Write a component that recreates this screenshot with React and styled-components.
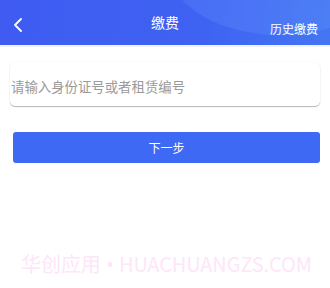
import React from "react";
import styled, { createGlobalStyle } from "styled-components";

const Global = createGlobalStyle`
  html, body {
    margin: 0;
    padding: 0;
    background: #ffffff;
    font-family: "Noto Sans CJK SC", "Noto Sans", sans-serif;
  }
`;

const Page = styled.div`
  width: 330px;
  height: 288px;
  overflow: hidden;
  background: #fff;
`;

const Header = styled.div`
  position: relative;
  height: 45px;
  overflow: hidden;
  background: linear-gradient(100deg, #3f5bf1 0%, #3e62f2 60%, #4476f2 100%);
  display: flex;
  align-items: center;
  justify-content: space-between;
  padding: 0 12px 0 13px;
  border-bottom: 2px solid #f2f3f7;
`;

const Swoosh = styled.div`
  position: absolute;
  right: -60px;
  top: -95px;
  width: 220px;
  height: 130px;
  border-radius: 50%;
  background: rgba(110, 160, 255, 0.22);
`;

const BackButton = styled.div`
  position: relative;
  z-index: 1;
  display: flex;
  margin-top: 5px;
`;

const Title = styled.div`
  position: absolute;
  left: 0;
  right: 0;
  top: 0;
  text-align: center;
  color: #fff;
  font-size: 14px;
  line-height: 44px;
`;

const HeaderLink = styled.div`
  position: relative;
  z-index: 1;
  color: #fff;
  font-size: 12px;
  margin-top: 11px;
`;

const Body = styled.div`
  padding: 15px 10px 0 10px;
`;

const InputCard = styled.div`
  height: 44px;
  border-radius: 5px;
  background: #fff;
  box-shadow: 0 1px 1px rgba(0, 0, 0, 0.28), 0 0 3px rgba(0, 0, 0, 0.04);
  display: flex;
  align-items: center;
  padding: 0 1px;
`;

const Input = styled.input`
  border: none;
  outline: none;
  width: 100%;
  font-family: inherit;
  font-size: 13.4px;
  color: #333;
  background: transparent;
  padding: 4px 0 0 0;
  &::placeholder {
    color: #9a9a9a;
  }
`;

const NextButton = styled.button`
  display: block;
  width: 307px;
  height: 31px;
  margin: 26px 0 0 3px;
  border: none;
  border-radius: 3px;
  background: #3d69f5;
  color: #fff;
  font-family: inherit;
  font-size: 12px;
`;

const Watermark = styled.div`
  margin-top: 86px;
  padding-left: 3px;
  text-align: center;
  color: #fde6f8;
  font-size: 20px;
  font-family: "Noto Sans CJK SC", "Noto Sans", sans-serif;
  letter-spacing: -0.1px;
  white-space: nowrap;
`;

const Dot = styled.span`
  font-family: "Noto Sans", sans-serif;
  margin: 0 1px;
`;

export default function App() {
  return (
    <Page>
      <Global />
      <Header>
        <Swoosh />
        <BackButton>
          <svg width="10" height="14" viewBox="0 0 10 14">
            <path d="M8 1 L2 7 L8 13" stroke="#fff" strokeWidth="1.8" fill="none" strokeLinecap="round" strokeLinejoin="round" />
          </svg>
        </BackButton>
        <Title>缴费</Title>
        <HeaderLink>历史缴费</HeaderLink>
      </Header>
      <Body>
        <InputCard>
          <Input placeholder="请输入身份证号或者租赁编号" />
        </InputCard>
        <NextButton>下一步</NextButton>
      </Body>
      <Watermark>
        华创应用 <Dot>•</Dot> HUACHUANGZS.COM
      </Watermark>
    </Page>
  );
}
